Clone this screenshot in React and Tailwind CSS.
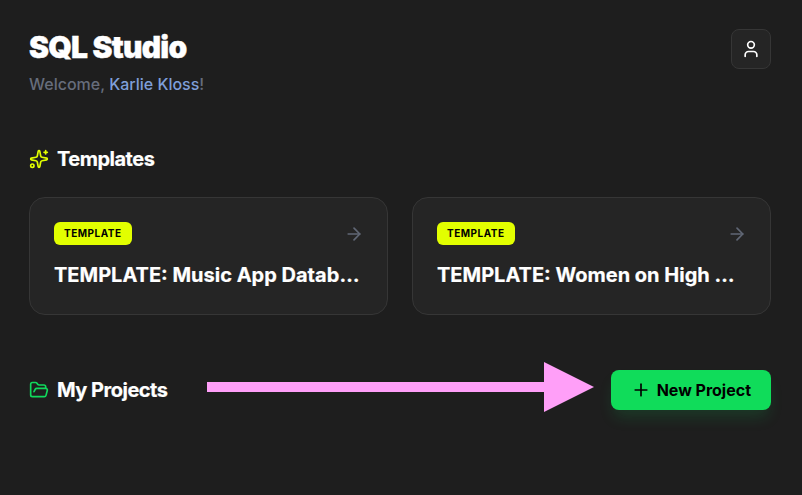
import React from 'react';
import { ArrowRight, FolderOpen, Plus, Sparkles, User } from 'lucide-react';

const templates = ['TEMPLATE: Music App Database', 'TEMPLATE: Women on High Heels Database'];

function TemplateCard({ name }) {
  return (
    <div className="h-[118px] min-w-0 rounded-2xl border border-[#363636] bg-[#252525] px-6 pt-6">
      <div className="flex items-center justify-between">
        <span className="rounded-md bg-[#e2ff00] px-2.5 py-1 text-[10px] leading-[15px] font-bold tracking-[0.5px] text-black">
          TEMPLATE
        </span>
        <ArrowRight className="-mr-px size-5 text-[#606775]" />
      </div>
      <h3 className="mt-4 truncate text-xl leading-7 font-bold text-white [-webkit-text-stroke:0.2px_white]">{name}</h3>
    </div>
  );
}

export default function App() {
  return (
    <div className="relative h-[495px] w-[802px] overflow-hidden bg-[#1e1e1e] pt-7 pr-[31px] pl-[29px] font-['Inter',sans-serif]">
      {/* Header */}
      <div className="flex items-start justify-between">
        <div>
          <h1 className="pt-px text-3xl leading-9 font-black tracking-tight text-white [-webkit-text-stroke:0.4px_white]">SQL Studio</h1>
          <p className="mt-[7px] text-base leading-6 font-medium text-[#666d7c]">
            Welcome, <span className="text-[#7e9fd9]">Karlie Kloss</span>!
          </p>
        </div>
        <button className="mt-px flex size-10 items-center justify-center rounded-lg border border-[#363636] bg-[#252525] text-white">
          <User className="size-5" />
        </button>
      </div>

      {/* Templates */}
      <div className="mt-[49px] flex items-center gap-2">
        <Sparkles className="size-5 text-[#e2ff00]" />
        <h2 className="text-xl leading-7 font-bold tracking-tight text-white [-webkit-text-stroke:0.2px_white]">Templates</h2>
      </div>
      <div className="mt-6 grid grid-cols-2 gap-6">
        {templates.map((name) => (
          <TemplateCard key={name} name={name} />
        ))}
      </div>

      {/* Projects */}
      <div className="mt-[55px] flex items-center justify-between">
        <div className="flex items-center gap-2">
          <FolderOpen className="size-5 text-[#10d95c]" />
          <h2 className="text-xl leading-7 font-bold tracking-tight text-white [-webkit-text-stroke:0.2px_white]">My Projects</h2>
        </div>
        <button className="flex h-10 items-center gap-1.5 rounded-lg bg-[#10dc5a] px-5 text-base font-bold text-black shadow-[0_10px_15px_-3px_rgba(16,223,92,0.15)]">
          <Plus className="size-5" />
          New Project
        </button>
      </div>

      {/* Annotation arrow */}
      <svg className="absolute top-[362px] left-[207px]" width="388" height="50" viewBox="0 0 388 50">
        <path d="M0 20H337V0L387 25L337 50V30H0Z" fill="#ff9ff8" />
      </svg>
    </div>
  );
}
